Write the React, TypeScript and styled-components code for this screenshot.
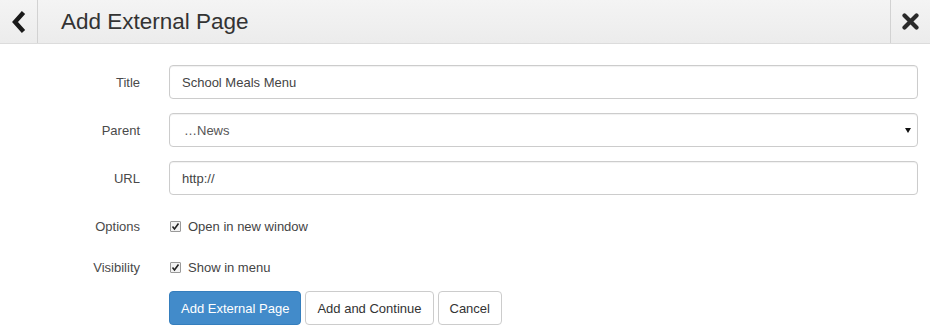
import React from "react";
import styled, { createGlobalStyle } from "styled-components";

const Global = createGlobalStyle`
  html, body { margin: 0; padding: 0; background: #fff; }
  body { font-family: "Liberation Sans", Arial, sans-serif; color: #333; }
  * { box-sizing: border-box; }
`;

const Page = styled.div`
  width: 930px;
  height: 332px;
  overflow: hidden;
  background: #fff;
`;

const Header = styled.div`
  display: flex;
  align-items: stretch;
  height: 44px;
  background: linear-gradient(#f4f4f4, #ececec);
  border-bottom: 1px solid #dcdcdc;
`;

const IconButton = styled.div<{ $side: "left" | "right" }>`
  width: ${(p) => (p.$side === "left" ? "38px" : "40px")};
  display: flex;
  align-items: center;
  justify-content: center;
  ${(p) => (p.$side === "left" ? "border-right" : "border-left")}: 1px solid #d2d2d2;
  color: #222;
`;

const HeaderTitle = styled.h1`
  flex: 1;
  margin: 0;
  padding-left: 23px;
  display: flex;
  align-items: center;
  font-size: 22.5px;
  font-weight: normal;
  color: #333;
`;

const Form = styled.div`
  display: flex;
  flex-direction: column;
  padding: 21px 12px 0 0;
`;

const Row = styled.div<{ $h: number; $mb: number }>`
  display: grid;
  grid-template-columns: 140px 1fr;
  column-gap: 29px;
  align-items: center;
  height: ${(p) => p.$h}px;
  margin-bottom: ${(p) => p.$mb}px;
`;

const Label = styled.label`
  text-align: right;
  font-size: 13px;
  color: #4a4a4a;
`;

const Input = styled.div`
  height: 34px;
  border: 1px solid #ccc;
  border-radius: 4px;
  display: flex;
  align-items: center;
  padding: 0 12px;
  font-size: 13px;
  color: #444;
  box-shadow: inset 0 1px 1px rgba(0, 0, 0, 0.06);
`;

const Select = styled(Input)`
  justify-content: space-between;
  padding: 0 6px 0 14px;
  color: #555;
`;

const Caret = styled.span`
  width: 0;
  height: 0;
  border-left: 3px solid transparent;
  border-right: 3px solid transparent;
  border-top: 5px solid #111;
`;

const Check = styled.div`
  display: flex;
  align-items: center;
  gap: 7px;
  font-size: 13px;
  color: #444;
`;

const Box = styled.span`
  width: 11px;
  height: 11px;
  margin-left: 1px;
  border: 1px solid #999;
  border-radius: 1px;
  background: #f3f3f3;
  display: flex;
  align-items: center;
  justify-content: center;
`;

const Buttons = styled.div`
  display: flex;
  gap: 4px;
`;

const Button = styled.button<{ $primary?: boolean }>`
  height: 34px;
  padding: 0 11px;
  font-family: inherit;
  font-size: 13px;
  border-radius: 4px;
  border: 1px solid ${(p) => (p.$primary ? "#357ebd" : "#ccc")};
  background: ${(p) => (p.$primary ? "#428bca" : "#fff")};
  color: ${(p) => (p.$primary ? "#fff" : "#333")};
`;

const Tick = () => (
  <svg width="9" height="9" viewBox="0 0 9 9">
    <path d="M1.5 4.5 L3.5 7 L7.5 1.5" fill="none" stroke="#222" strokeWidth="1.6" />
  </svg>
);

export default function App() {
  return (
    <Page>
      <Global />
      <Header>
        <IconButton $side="left">
          <svg width="16" height="24" viewBox="0 0 16 24">
            <path d="M12.5 2.5 L4 12 L12.5 21.5" fill="none" stroke="#1a1a1a" strokeWidth="4.4" strokeLinejoin="miter" />
          </svg>
        </IconButton>
        <HeaderTitle>Add External Page</HeaderTitle>
        <IconButton $side="right">
          <svg width="17" height="17" viewBox="0 0 17 17">
            <path d="M2.5 2.5 L14.5 14.5 M14.5 2.5 L2.5 14.5" stroke="#2a2a2a" strokeWidth="4.2" strokeLinecap="round" />
          </svg>
        </IconButton>
      </Header>
      <Form>
        <Row $h={34} $mb={14}>
          <Label>Title</Label>
          <Input>School Meals Menu</Input>
        </Row>
        <Row $h={34} $mb={14}>
          <Label>Parent</Label>
          <Select>
            <span>…News</span>
            <Caret />
          </Select>
        </Row>
        <Row $h={34} $mb={16}>
          <Label>URL</Label>
          <Input>http://</Input>
        </Row>
        <Row $h={30} $mb={11}>
          <Label>Options</Label>
          <Check>
            <Box><Tick /></Box>
            Open in new window
          </Check>
        </Row>
        <Row $h={30} $mb={9}>
          <Label>Visibility</Label>
          <Check>
            <Box><Tick /></Box>
            Show in menu
          </Check>
        </Row>
        <Row $h={34} $mb={0}>
          <span />
          <Buttons>
            <Button $primary>Add External Page</Button>
            <Button>Add and Continue</Button>
            <Button>Cancel</Button>
          </Buttons>
        </Row>
      </Form>
    </Page>
  );
}
